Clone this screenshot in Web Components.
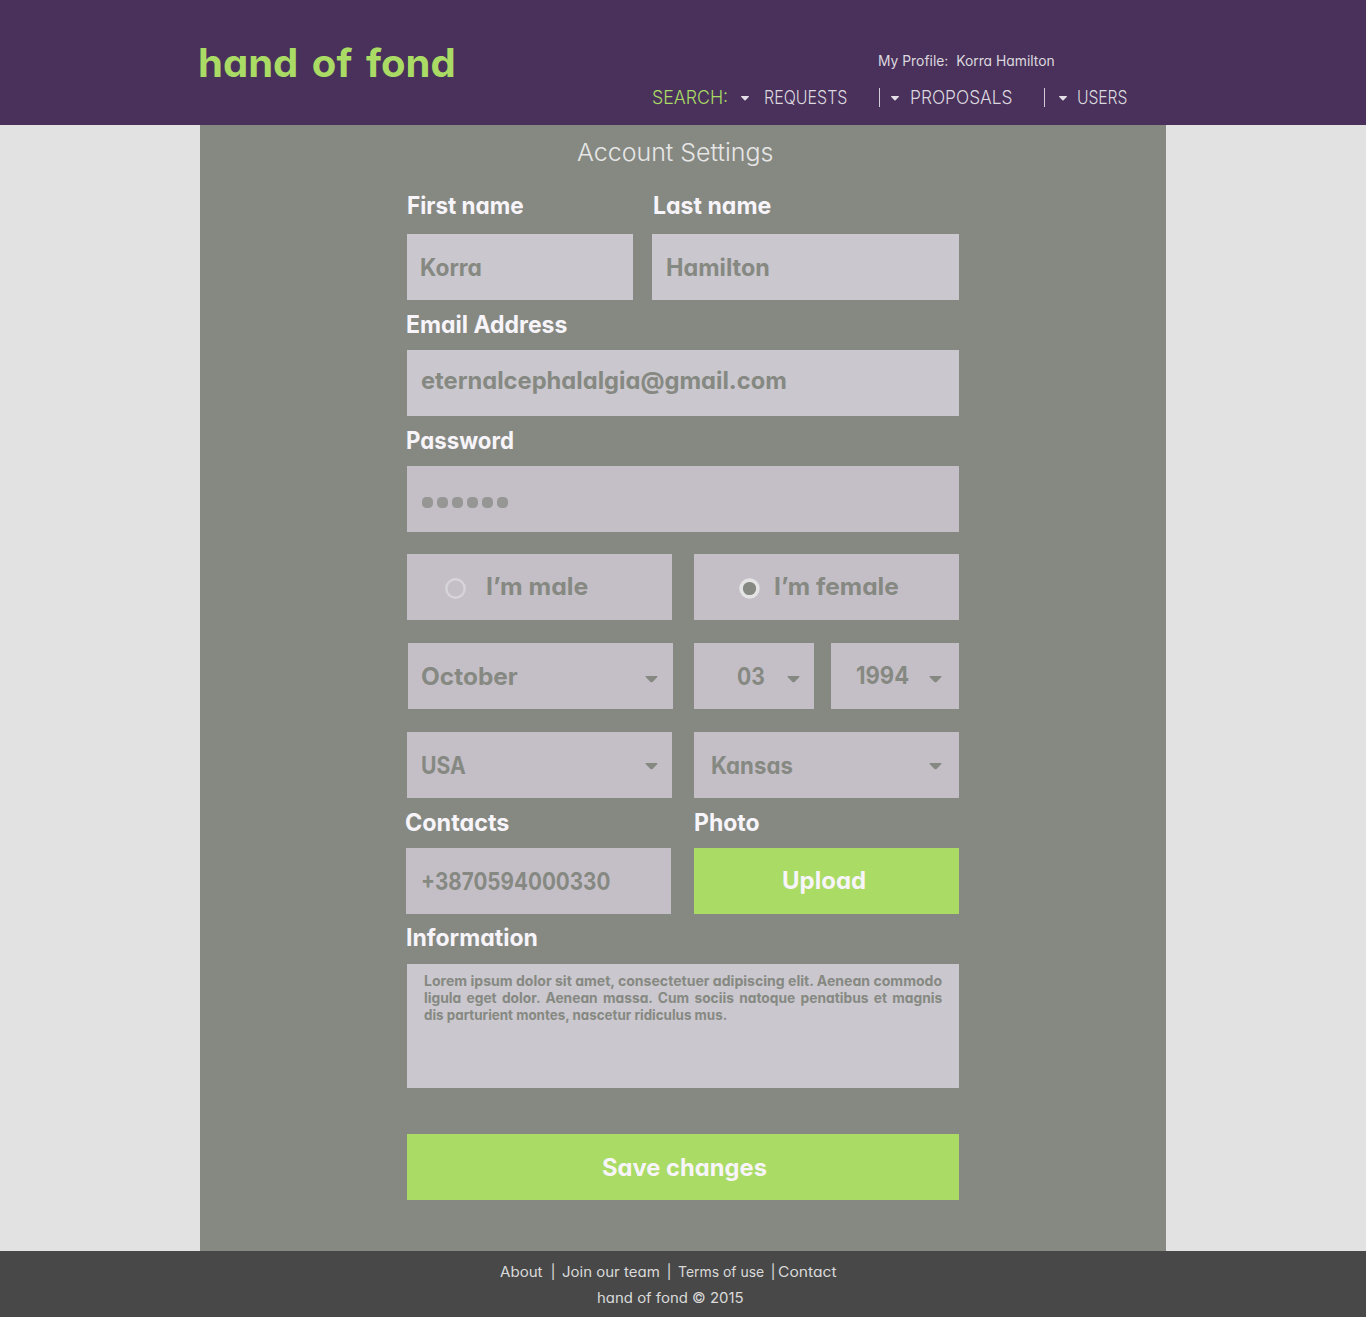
<!DOCTYPE html>
<html lang="en">
<head>
<meta charset="utf-8">
<title>hand of fond - Account Settings</title>
<style>
body{margin:0;background:#e2e2e2;font-family:"Century Gothic",Inter,"Liberation Sans",sans-serif;font-feature-settings:"cv11" 1;}
</style>
</head>
<body>
<account-page></account-page>
<script>
// Single line of text whose ink spans exactly `w` pixels: glyphs are stretched
// within a small range, and tracking makes up any remainder.
class FitText extends HTMLElement{
  connectedCallback(){
    if(this.shadowRoot) return;
    const size=+(this.getAttribute('size')||24), weight=this.getAttribute('weight')||700, w=+this.getAttribute('w'), ws=+(this.getAttribute('ws')||0);
    this.attachShadow({mode:'open'}).innerHTML=`<style>
      :host{display:block;flex:none;width:${w}px;font-size:${size}px;font-weight:${weight};line-height:var(--lh,30px);height:var(--lh,30px);white-space:pre}
      span{display:inline-block;transform-origin:0 50%;word-spacing:${ws}px}</style><span><slot></slot></span>`;
    const span=this.shadowRoot.querySelector('span'), text=this.textContent;
    const ctx=FitText.ctx||(FitText.ctx=document.createElement('canvas').getContext('2d'));
    ctx.font=`${weight} ${size}px "Century Gothic",Inter,"Liberation Sans",sans-serif`;
    const m=ctx.measureText(text), left=-m.actualBoundingBoxLeft, right=m.width-m.actualBoundingBoxRight;
    const ink=span.getBoundingClientRect().width-left-right;
    const scale=Math.min(1.13,Math.max(.85,w/ink));
    if(text.length>1) span.style.letterSpacing=(w/scale-ink)/(text.length-1)+'px';
    span.style.transform=`scaleX(${scale})`;
    span.style.marginLeft=-left*scale+'px';
  }
}
customElements.define('fit-text',FitText);

class CaretIcon extends HTMLElement{
  connectedCallback(){
    if(this.shadowRoot) return;
    const s=this.hasAttribute('small');
    this.attachShadow({mode:'open'}).innerHTML=`<style>:host{display:block;flex:none}svg{display:block}</style>`+
    (s?`<svg width="8" height="5" viewBox="0 0 8 5"><path d="M.3 0h7.4q.5.5 0 1L4.6 4.2q-.6.5-1.2 0L.3 1q-.5-.5 0-1z" fill="#e2dde6"/></svg>`
      :`<svg width="13" height="7" viewBox="0 0 13 7"><path d="M1 0h11q1 .3.4 1.1L7.6 5.9q-1.1.9-2.2 0L.6 1.1Q0 .3 1 0z" fill="#868982"/></svg>`);
  }
}
customElements.define('caret-icon',CaretIcon);

const define=(name,html)=>{
  const t=document.createElement('template');t.innerHTML=html;
  customElements.define(name,class extends HTMLElement{
    connectedCallback(){ if(!this.shadowRoot) this.attachShadow({mode:'open'}).append(t.content.cloneNode(true)); }
  });
};

define('field-box',`<style>
:host{display:flex;flex:none;box-sizing:border-box;height:66px;align-items:flex-start;background:#c4bfc7;color:#868982}
:host([light]){background:#cac7ce}
:host([action]){background:#a9db65;color:#f7f4fa}
</style><slot></slot>`);

define('radio-mark',`<style>
:host{display:block;flex:none}svg{display:block}
.dot{display:none}
:host([checked]) .dot{display:block}
:host([checked]) .ring{stroke:#e5e4e5;stroke-width:3.6;r:8.4px}
</style><svg width="21" height="21" viewBox="0 0 21 21"><circle class="ring" cx="10.5" cy="10.5" r="9.2" fill="none" stroke="#d7d4da" stroke-width="2.4"/><circle class="dot" cx="10.5" cy="10.5" r="6.6" fill="#868982"/></svg>`);

define('password-dots',`<style>
:host{display:flex;gap:4px}
i{width:11px;height:11px;border-radius:4.5px;background:#969694}
</style><i></i><i></i><i></i><i></i><i></i><i></i>`);

define('site-header',`<style>
:host{display:flex;box-sizing:border-box;height:125px;padding-left:200px;background:#49315b;color:#dcd8df}
.logo{--lh:48px;color:#a9db65;padding-top:39px;width:453px}
.profile{padding:46px 0 0 226px}
nav{display:flex;align-items:center;height:20px;margin-top:11px;--lh:20px}
.s{color:#a9db65}
hr{margin:0;border:0;width:1px;height:19px;background:#d3cdd8}
</style>
<div class="logo"><fit-text w="254" size="39" ws="4">hand of fond</fit-text></div>
<div class="right">
<div class="profile"><fit-text w="175.5" size="14" weight="400">My Profile:  Korra Hamilton</fit-text></div>
<nav>
<fit-text class="s" w="74" size="18.5" weight="300">SEARCH:</fit-text>
<caret-icon small style="margin:3px 16px 0 14px"></caret-icon>
<fit-text w="82" size="18.5" weight="300">REQUESTS</fit-text>
<hr style="margin-left:32px"><caret-icon small style="margin:3px 12px 0 11px"></caret-icon>
<fit-text w="101" size="18.5" weight="300">PROPOSALS</fit-text>
<hr style="margin-left:32px"><caret-icon small style="margin:3px 11px 0 14px"></caret-icon>
<fit-text w="49" size="18.5" weight="300">USERS</fit-text>
</nav></div>`);

define('settings-form',`<style>
:host{display:block;box-sizing:border-box;width:966px;height:1126px;margin-left:200px;background:#868982;padding-left:206px;color:#f7f4fa}
.row{display:flex;align-items:flex-start}
.title{color:#e6e6e6;padding:13px 0 0 171px}
.bio{--lh:17px;flex-direction:column}
</style>
<div class="title"><fit-text w="196" size="24" weight="300">Account Settings</fit-text></div>
<div class="row" style="padding:22.5px 0 0 1.5px;height:43.5px;gap:131px"><fit-text w="115.5">First name</fit-text><fit-text w="117">Last name</fit-text></div>
<div class="row" style="padding-left:1px;gap:19px">
 <field-box light style="width:226px;padding:19px 0 0 14px"><fit-text w="60">Korra</fit-text></field-box>
 <field-box light style="width:307px;padding:19px 0 0 15px"><fit-text w="102">Hamilton</fit-text></field-box></div>
<div class="row" style="padding:10px 0 0 1px;height:40px"><fit-text w="160">Email Address</fit-text></div>
<div class="row" style="padding-left:1px"><field-box light style="width:552px;padding:15.5px 0 0 14px"><fit-text w="365">eternalcephalalgia@gmail.com</fit-text></field-box></div>
<div class="row" style="padding:10px 0 0 1px;height:40px"><fit-text w="106">Password</fit-text></div>
<div class="row" style="padding-left:1px"><field-box style="width:552px;padding:31px 0 0 15px"><password-dots></password-dots></field-box></div>
<div class="row" style="padding:22px 0 0 1px;gap:22px">
 <field-box style="width:265px;padding:18px 0 0 38px"><radio-mark style="margin-top:5.5px"></radio-mark><fit-text w="101" style="margin-left:21px">I’m male</fit-text></field-box>
 <field-box style="width:265px;padding:18px 0 0 44.5px"><radio-mark checked style="margin-top:5.5px"></radio-mark><fit-text w="123.5" style="margin-left:16px">I’m female</fit-text></field-box></div>
<div class="row" style="padding:23px 0 0 2px">
 <field-box style="width:265px;padding:19px 0 0 14px"><fit-text w="96">October</fit-text><caret-icon style="margin:14px 0 0 127px"></caret-icon></field-box>
 <field-box style="width:120px;margin-left:21px;padding:19px 0 0 43.5px"><fit-text w="26.5">03</fit-text><caret-icon style="margin:14px 0 0 23px"></caret-icon></field-box>
 <field-box style="width:128px;margin-left:17px;padding:18px 0 0 25.5px"><fit-text w="52">1994</fit-text><caret-icon style="margin:15px 0 0 20.5px"></caret-icon></field-box></div>
<div class="row" style="padding:23px 0 0 1px;gap:22px">
 <field-box style="width:265px;padding:19px 0 0 15px"><fit-text w="44">USA</fit-text><caret-icon style="margin:12px 0 0 179px"></caret-icon></field-box>
 <field-box style="width:265px;padding:19px 0 0 18px"><fit-text w="80.5">Kansas</fit-text><caret-icon style="margin:12px 0 0 136.5px"></caret-icon></field-box></div>
<div class="row" style="padding-top:10px;height:40px;gap:185.5px"><fit-text w="103">Contacts</fit-text><fit-text w="64">Photo</fit-text></div>
<div class="row" style="gap:23px">
 <field-box style="width:265px;padding:19px 0 0 17px"><fit-text w="187.5">+3870594000330</fit-text></field-box>
 <field-box action style="width:265px;padding:18px 0 0 88.5px"><fit-text w="82">Upload</fit-text></field-box></div>
<div class="row" style="padding:9px 0 0 .5px;height:41px"><fit-text w="130">Information</fit-text></div>
<div class="row" style="padding-left:1px"><field-box light class="bio" style="width:552px;height:124px;padding:8px 0 0 16.5px">
 <fit-text w="518.5" size="14">Lorem ipsum dolor sit amet, consectetuer adipiscing elit. Aenean commodo</fit-text>
 <fit-text w="518.5" size="14" ws="2">ligula eget dolor. Aenean massa. Cum sociis natoque penatibus et magnis</fit-text>
 <fit-text w="302.5" size="14">dis parturient montes, nascetur ridiculus mus.</fit-text></field-box></div>
<div class="row" style="padding:46px 0 0 1px"><field-box action style="width:552px;padding:19px 0 0 194.5px"><fit-text w="164.5">Save changes</fit-text></field-box></div>`);

define('site-footer',`<style>
:host{display:block;box-sizing:border-box;height:66px;background:#484848;color:#dadada;--lh:26px;padding-top:8px}
div{display:flex;padding-left:500px;align-items:center}
div+div{padding-left:598px}
</style>
<div><fit-text w="43" size="14" weight="400">About</fit-text><fit-text w="1.5" size="14" weight="500" style="margin:0 9px 0 8.5px">|</fit-text><fit-text w="97.5" size="14" weight="400">Join our team</fit-text><fit-text w="1.5" size="14" weight="500" style="margin:0 8.5px 0 8px">|</fit-text><fit-text w="86" size="14" weight="400">Terms of use</fit-text><fit-text w="1.5" size="14" weight="500" style="margin:0 4px 0 8.5px">|</fit-text><fit-text w="59" size="14" weight="400">Contact</fit-text></div>
<div><fit-text w="145" size="14" weight="400">hand of fond © 2015</fit-text></div>`);

define('account-page',`<style>:host{display:block;width:1366px;height:1317px;overflow:hidden}</style>
<site-header></site-header><settings-form></settings-form><site-footer></site-footer>`);
</script>
</body>
</html>
